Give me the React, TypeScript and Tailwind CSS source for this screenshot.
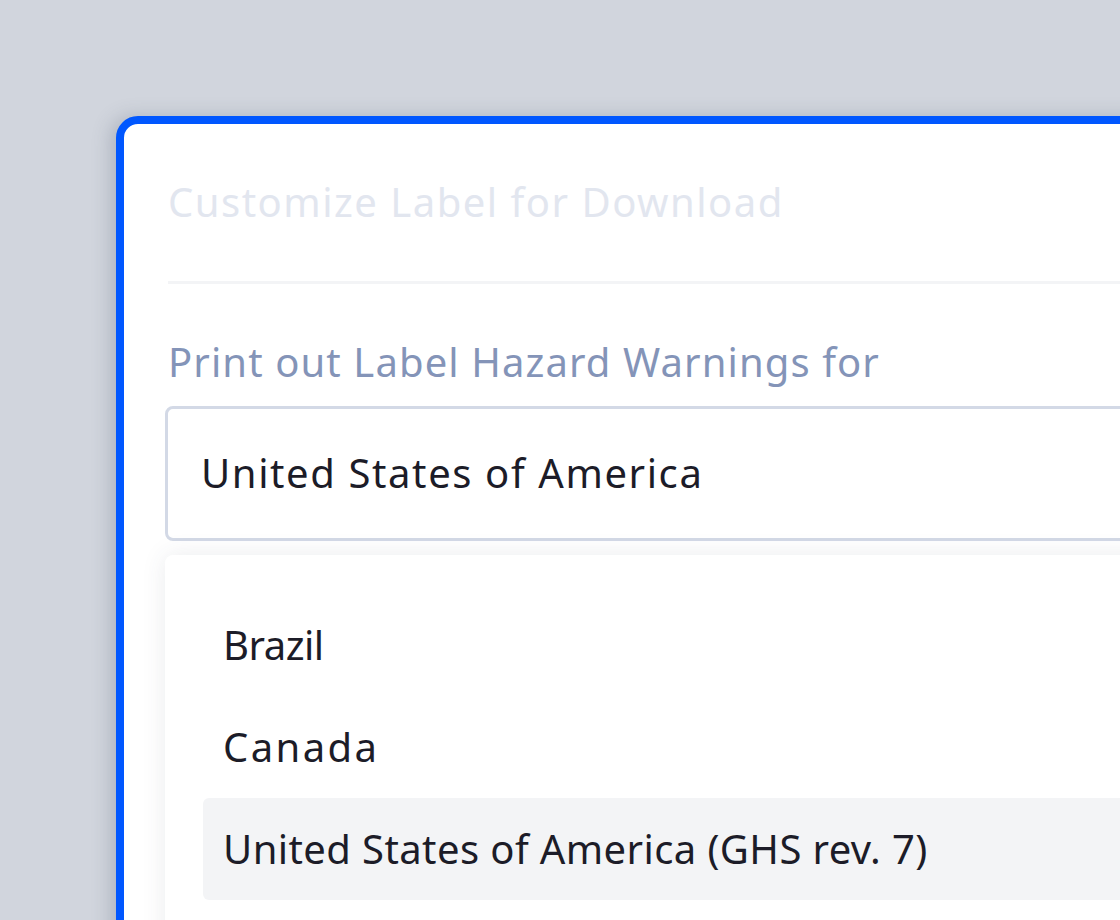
import React from "react";

const options = [
  { label: "Brazil", tracking: "tracking-[-0.5px]" },
  { label: "Canada", tracking: "tracking-[2.4px]" },
  { label: "United States of America (GHS rev. 7)", tracking: "tracking-[0.4px]" },
];

export default function App() {
  const selected = 2;

  return (
    <div
      className="h-[920px] w-[1120px] overflow-hidden bg-[#d1d5dd] pt-[116px] pl-[116px]"
      style={{ fontFamily: '"Noto Sans", "Open Sans", sans-serif' }}
    >
      {/* Card */}
      <div className="h-[900px] w-[1100px] rounded-[22px] border-[8px] border-[#0057ff] bg-white pt-[54px] pl-[41px] shadow-[-6px_0_18px_rgba(80,90,110,0.25)]">
        {/* Title */}
        <div className="pl-[3px] text-[40px] leading-[48px] tracking-[1.5px] text-[#e2e6ef]">
          Customize Label for Download
        </div>
        <div className="mt-[55px] ml-[3px] h-[3px] bg-[#f3f4f6]" />

        {/* Label */}
        <div className="mt-[54px] pl-[3px] text-[40px] leading-[48px] tracking-[1.1px] text-[#8494b8]">
          Print out Label Hazard Warnings for
        </div>

        {/* Select box */}
        <div className="mt-[20px] h-[135px] rounded-[8px] border-[3px] border-[#d3d9e6] py-[40px] pl-[33px] text-[40px] leading-[48px] tracking-[1.6px] text-[#1c1c28]">
          United States of America
        </div>

        {/* Dropdown */}
        <div className="mt-[14px] h-[400px] rounded-[8px] bg-white px-[38px] pt-[39px] shadow-[0_0_24px_rgba(60,70,90,0.1)]">
          {options.map((o, i) => (
            <div
              key={o.label}
              className={`rounded-[6px] px-[20px] py-[27px] text-[40px] leading-[48px] text-[#1c1c28] ${o.tracking} ${
                i === selected ? "bg-[#f3f4f6]" : ""
              }`}
            >
              {o.label}
            </div>
          ))}
        </div>
      </div>
    </div>
  );
}
